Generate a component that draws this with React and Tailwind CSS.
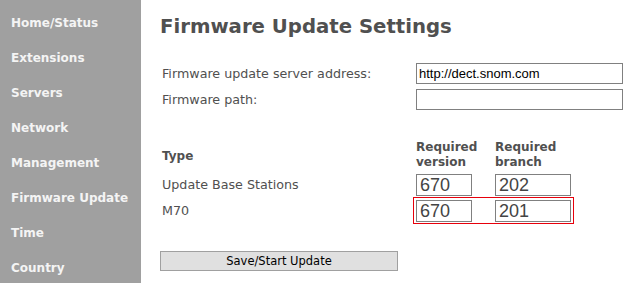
import React from 'react';

const menu = [
  'Home/Status',
  'Extensions',
  'Servers',
  'Network',
  'Management',
  'Firmware Update',
  'Time',
  'Country',
];

const App = () => {
  return (
    <div className="w-[636px] h-[283px] flex bg-white overflow-hidden">
      {/* left menu */}
      <div className="w-[141px] h-full bg-[#a0a0a0] flex flex-col pt-[14px] pl-[11px] shrink-0">
        {menu.map((item) => (
          <div
            key={item}
            className="h-[35px] shrink-0 text-[12px] font-bold text-[#f4f4f4] font-['DejaVu_Sans',sans-serif] leading-[18px]"
          >
            {item}
          </div>
        ))}
      </div>

      {/* content */}
      <div className="flex-1 pl-[19px] font-['DejaVu_Sans',sans-serif] text-[#505050]">
        <h1 className="text-[19.7px] font-bold leading-[24px] mt-[15px] text-[#505050]">
          Firmware Update Settings
        </h1>

        <div className="mt-[24px] flex flex-col gap-[5px]">
          <div className="flex items-center h-[21px]">
            <label className="w-[256px] pl-[2px] text-[12.7px]">Firmware update server address:</label>
            <input
              defaultValue="http://dect.snom.com"
              className="w-[207px] h-[21px] border border-[#808080] px-[2px] text-[13px] text-black font-['Liberation_Sans',sans-serif] outline-none"
            />
          </div>
          <div className="flex items-center h-[21px]">
            <label className="w-[256px] pl-[2px] text-[12.7px]">Firmware path:</label>
            <input className="w-[207px] h-[21px] border border-[#808080] px-[2px] text-[13px] text-black font-['Liberation_Sans',sans-serif] outline-none" />
          </div>
        </div>

        <div className="mt-[30px] flex items-end">
          <div className="w-[256px] pl-[2px] text-[12px] font-bold pb-[5px]">Type</div>
          <div className="w-[79px] text-[12px] font-bold leading-[15px]">Required<br />version</div>
          <div className="w-[79px] text-[12px] font-bold leading-[15px]">Required<br />branch</div>
        </div>

        <div className="mt-[4px] flex items-center h-[22px]">
          <div className="w-[256px] pl-[2px] text-[12.7px]">Update Base Stations</div>
          <input
            defaultValue="670"
            className="w-[56px] h-[22px] border border-[#808080] px-[3px] text-[18px] text-[#444] font-['Liberation_Sans',sans-serif] outline-none"
          />
          <input
            defaultValue="202"
            className="ml-[23px] w-[76px] h-[22px] border border-[#808080] px-[3px] text-[18px] text-[#444] font-['Liberation_Sans',sans-serif] outline-none"
          />
        </div>

        <div className="mt-[1px] flex items-start h-[27px]">
          <div className="w-[253px] pl-[2px] pt-[4px] text-[12.7px]">M70</div>
          <div className="flex items-start h-[27px] w-[161px] border border-solid border-red-600 pl-[2px] pt-[2px]">
            <input
              defaultValue="670"
              className="w-[56px] h-[22px] border border-[#808080] px-[3px] text-[18px] text-[#444] font-['Liberation_Sans',sans-serif] outline-none"
            />
            <input
              defaultValue="201"
              className="ml-[23px] w-[76px] h-[22px] border border-[#808080] px-[3px] text-[18px] text-[#444] font-['Liberation_Sans',sans-serif] outline-none"
            />
          </div>
        </div>

        <button className="mt-[27px] w-[238px] h-[20px] bg-[#e0e0e0] border border-[#a0a0a0] text-[11.5px] text-black leading-[18px] font-['DejaVu_Sans',sans-serif]">
          Save/Start Update
        </button>
      </div>
    </div>
  );
};

export default App;
